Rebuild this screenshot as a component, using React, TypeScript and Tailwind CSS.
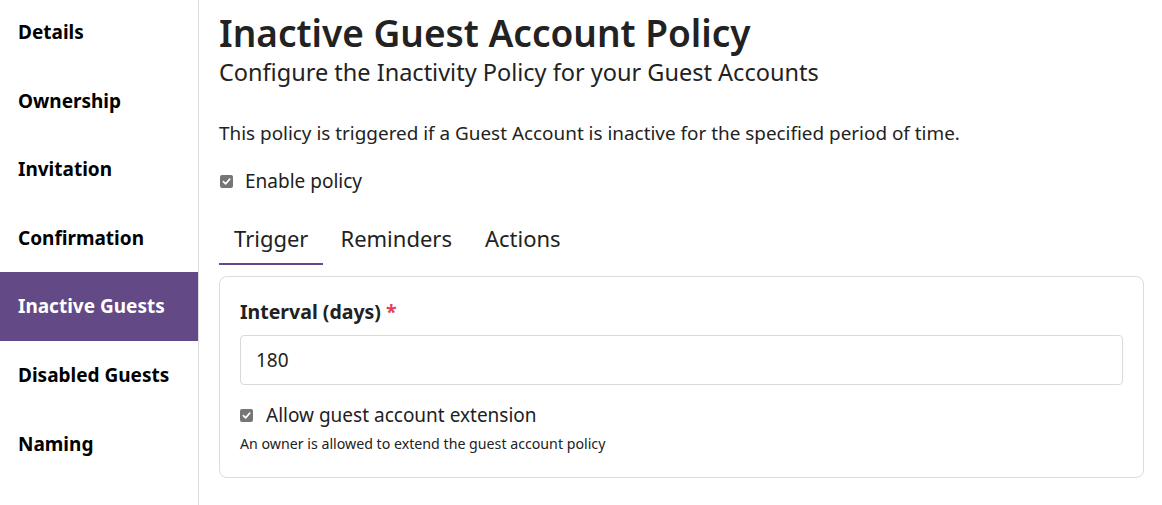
import React from 'react';

const navItems = [
  'Details',
  'Ownership',
  'Invitation',
  'Confirmation',
  'Inactive Guests',
  'Disabled Guests',
  'Naming',
];

function Check() {
  return (
    <span className="inline-flex items-center justify-center w-[13px] h-[13px] rounded-[2px] bg-[#767676] shrink-0">
      <svg width="9" height="9" viewBox="0 0 10 10" fill="none">
        <path d="M1.5 5.2 L4 7.6 L8.6 2.4" stroke="white" strokeWidth="1.8" strokeLinecap="round" strokeLinejoin="round" />
      </svg>
    </span>
  );
}

export default function App() {
  return (
    <div className="flex w-[1162px] h-[505px] bg-white text-[#212121] overflow-hidden" style={{ fontFamily: '"Noto Sans", "Open Sans", sans-serif' }}>
      {/* sidebar */}
      <div className="w-[199px] shrink-0 border-r border-[#dcdcdc]">
        <ul className="flex flex-col -mt-[2px]">
          {navItems.map((item) => (
            <li
              key={item}
              className={
                'h-[68.6px] flex items-center px-[18px] text-[19px] font-bold ' +
                (item === 'Inactive Guests' ? 'bg-[#634a87] text-white' : 'text-black')
              }
            >
              {item}
            </li>
          ))}
        </ul>
      </div>

      {/* main */}
      <div className="flex-1 pl-[20px] pr-[18px]">
        <h1 className="text-[37px] font-semibold leading-[44px] mt-[11px] text-[#222]">Inactive Guest Account Policy</h1>
        <h2 className="text-[23.5px] leading-[30px] mt-[2px] text-[#222]">Configure the Inactivity Policy for your Guest Accounts</h2>
        <p className="text-[18.9px] leading-[26px] mt-[33px] text-[#222]">
          This policy is triggered if a Guest Account is inactive for the specified period of time.
        </p>
        <label className="flex items-center gap-[12px] mt-[22px] text-[19px] leading-[26px] pl-[1px]">
          <Check />
          <span>Enable policy</span>
        </label>

        <div className="flex mt-[29px] text-[22px] leading-[30px] text-[#222]">
          <div className="px-[15px] pb-[10px] border-b-2 border-[#634a87]">Trigger</div>
          <div className="px-[17px] pb-[10px]">Reminders</div>
          <div className="px-[16px] pb-[10px]">Actions</div>
        </div>

        <div className="mt-[11px] border border-[#dcdcdc] rounded-[8px] px-[20px] pt-[22px] pb-[23px]">
          <div className="text-[19.5px] font-bold leading-[26px]">
            Interval (days) <span className="text-[#e0425f]">*</span>
          </div>
          <input
            readOnly
            value="180"
            className="mt-[10px] w-full h-[50px] border border-[#dadada] rounded-[4px] px-[15px] text-[19px] text-[#222] outline-none"
          />
          <label className="flex items-center gap-[13px] mt-[17px] text-[19px] leading-[26px]">
            <Check />
            <span>Allow guest account extension</span>
          </label>
          <div className="text-[14.2px] leading-[20px] mt-[6px] text-[#222]">
            An owner is allowed to extend the guest account policy
          </div>
        </div>
      </div>
    </div>
  );
}
